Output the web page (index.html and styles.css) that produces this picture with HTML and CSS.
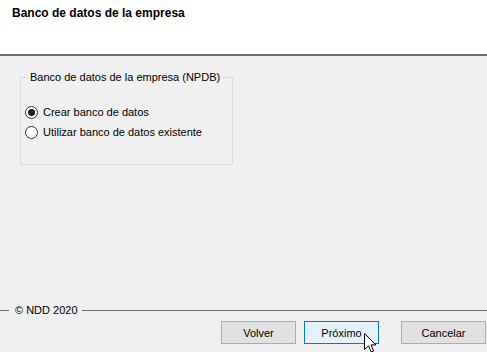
FILE: index.html
```html
<!DOCTYPE html>
<html lang="es">
<head>
    <meta charset="UTF-8">
    <title>Banco de datos de la empresa</title>
    <link rel="stylesheet" href="styles.css">
</head>
<body>
    <header class="wizard-header">
        <h1 class="wizard-title">Banco de datos de la empresa</h1>
    </header>

    <main class="wizard-body">
        <fieldset class="group-box">
            <legend>Banco de datos de la empresa (NPDB)</legend>
            <label class="radio-row">
                <span class="radio checked"></span>
                <span>Crear banco de datos</span>
            </label>
            <label class="radio-row">
                <span class="radio"></span>
                <span>Utilizar banco de datos existente</span>
            </label>
        </fieldset>
    </main>

    <footer class="wizard-footer">
        <div class="footer-line">
            <span class="line short"></span>
            <span class="copy">&copy; NDD 2020</span>
            <span class="line"></span>
        </div>
        <div class="buttons">
            <button class="btn back">Volver</button>
            <button class="btn next">Próximo</button>
            <button class="btn cancel">Cancelar</button>
        </div>
    </footer>

    <!-- mouse pointer over the "Próximo" button -->
    <svg class="cursor" width="13" height="20" viewBox="0 0 13 20">
        <path d="M0.5 0.5 L0.5 16.5 L4.5 12.8 L7.2 19 L9.6 18 L7 11.9 L12 11.9 Z" fill="#fff" stroke="#000" stroke-width="1" stroke-linejoin="miter"/>
    </svg>
</body>
</html>
```

FILE: styles.css
```css
body {
    font-family: 'Liberation Sans', Arial, sans-serif;
    font-size: 11px;
    margin: 0;
    width: 487px;
    height: 352px;
    display: flex;
    flex-direction: column;
    background-color: #f0f0f0;
    color: #000;
    position: relative;
    overflow: hidden;
}

.wizard-header {
    height: 54px;
    background-color: #ffffff;
    border-bottom: 2px solid #6e6e6e;
}

.wizard-title {
    margin: 0;
    padding: 6px 12px 0;
    font-size: 12px;
    font-weight: bold;
    line-height: 15px;
}

.wizard-body {
    flex-grow: 1;
}

.group-box {
    margin: 14px 0 0 20px;
    width: 203px;
    min-width: 0;
    height: 76px;
    padding: 17px 4px 0;
    border: 1px solid #dcdcdc;
    box-sizing: content-box;
}

.group-box legend {
    padding: 0 2px;
    margin-left: 3px;
    line-height: 15px;
    white-space: nowrap;
}

.radio-row {
    display: flex;
    align-items: center;
    height: 20px;
    gap: 5px;
    white-space: nowrap;
}

.radio {
    width: 11px;
    height: 11px;
    border: 1px solid #333;
    border-radius: 50%;
    background-color: #fff;
    display: flex;
    align-items: center;
    justify-content: center;
}

.radio.checked::after {
    content: '';
    width: 7px;
    height: 7px;
    border-radius: 50%;
    background-color: #2a1a1a;
}

.footer-line {
    display: flex;
    align-items: center;
    height: 14px;
    margin-bottom: 4px;
}

.line {
    flex: 1;
    height: 1px;
    background-color: #6e6e6e;
}

.line.short {
    flex: 0 0 9px;
}

.copy {
    padding: 0 4px 0 6px;
    line-height: 14px;
}

.buttons {
    display: flex;
    justify-content: flex-end;
    padding-right: 1px;
    margin-bottom: 8px;
}

.btn {
    font-family: inherit;
    font-size: 11px;
    width: 75px;
    height: 23px;
    padding: 0;
    background-color: #e1e1e1;
    border: 1px solid #adadad;
    color: #000;
}

.btn.back {
    margin-right: 8px;
}

.btn.next {
    margin-right: 22px;
    background-color: #e5f1fb;
    border-color: #0078d7;
}

.btn.cancel {
    width: 85px;
}

.cursor {
    position: absolute;
    left: 364px;
    top: 333px;
}
```
